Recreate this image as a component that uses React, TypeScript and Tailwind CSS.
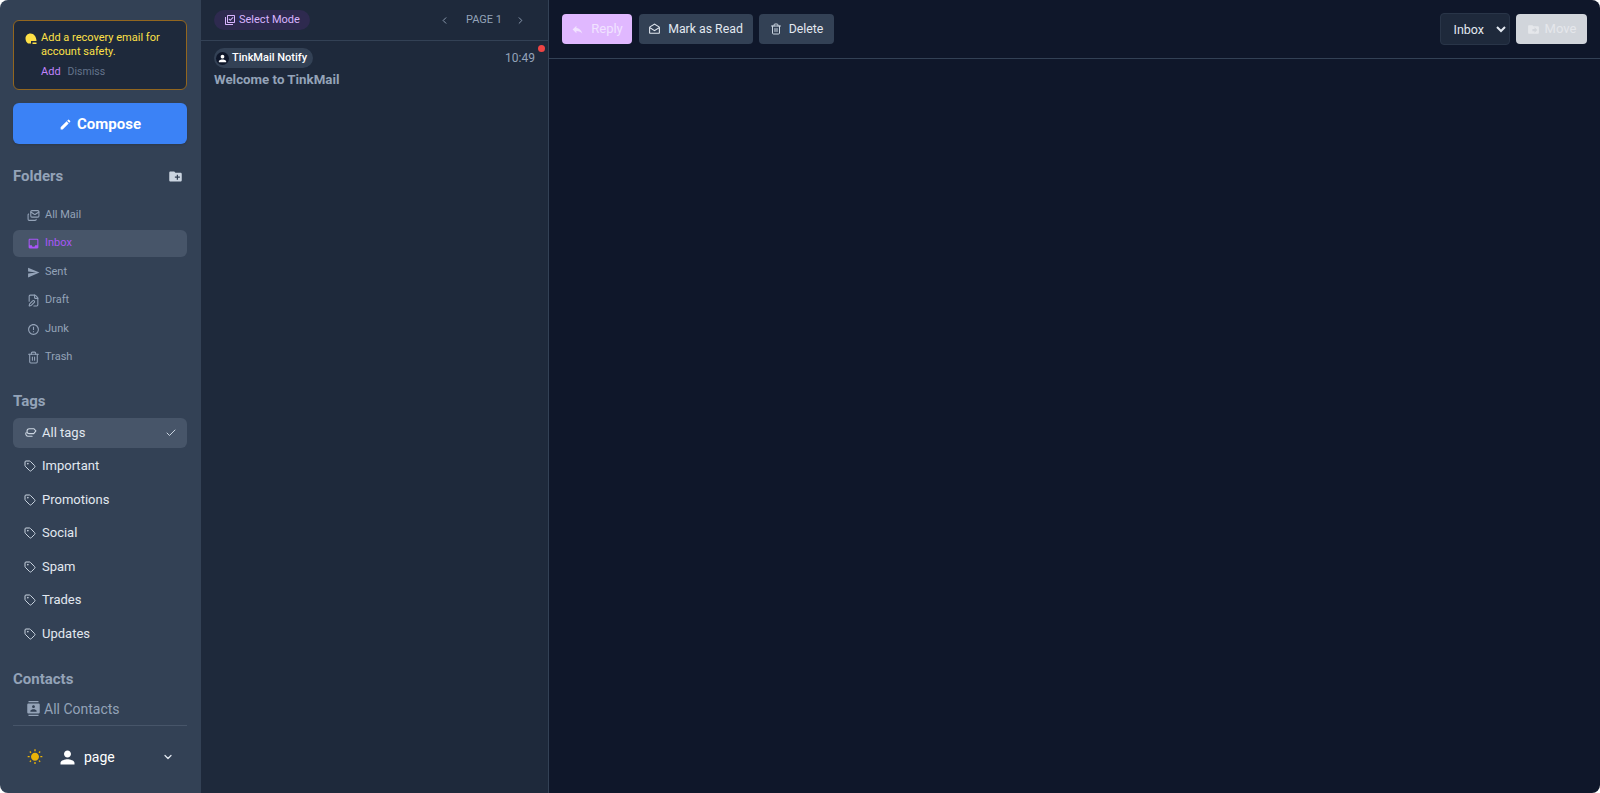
import { Check, ChevronDown, ChevronLeft, ChevronRight, FilePen, Mails, Tag, Trash2 } from "lucide-react";
import {
  MdContacts,
  MdCreateNewFolder,
  MdDriveFileMove,
  MdEdit,
  MdErrorOutline,
  MdInbox,
  MdOutlineDrafts,
  MdOutlineLibraryAddCheck,
  MdPerson,
  MdReply,
  MdSend,
  MdWbSunny,
} from "react-icons/md";

const folders = [
  { name: "All Mail", icon: Mails },
  { name: "Inbox", icon: MdInbox, active: true },
  { name: "Sent", icon: MdSend },
  { name: "Draft", icon: FilePen },
  { name: "Junk", icon: MdErrorOutline },
  { name: "Trash", icon: Trash2 },
];

const tags = ["Important", "Promotions", "Social", "Spam", "Trades", "Updates"];

function HelmetIcon() {
  return (
    <svg viewBox="0 0 24 24" className="absolute left-[11px] top-[12px] w-[12px] h-[12px] text-[#fde047]" fill="currentColor">
      <path d="M11 1C5 1 1 5.500 1 11c0 4 2 8 5 10h6v-5h11c0-8-5-15-12-15z" />
      <path d="M15 19h8v3h-8z" />
    </svg>
  );
}

function AllTagsIcon() {
  return (
    <svg viewBox="0 0 24 24" className="w-[13px] h-[13px] text-[#cbd5e1]" fill="none" stroke="currentColor" strokeWidth="2" strokeLinecap="round" strokeLinejoin="round">
      <path d="M10 5h8l4 4-4 5h-8a4.500 4.500 0 0 1 0-9z" />
      <path d="M4 12a4.500 4.500 0 0 0 4 7h7" />
    </svg>
  );
}

function Sidebar() {
  return (
    <aside className="w-[201px] shrink-0 bg-[#334155] pl-[13px] pr-[14px] pt-5 flex flex-col">
      <div className="h-[70px] rounded-md border border-[#92661f] bg-[#1e293b] pl-[27px] pr-2 pt-[10px] relative">
        <HelmetIcon />
        <p className="text-[11px] leading-[14px] text-[#fde047]">Add a recovery email for account safety.</p>
        <div className="mt-[6px] flex gap-[7px] text-[11px] leading-[14px]">
          <span className="text-[#c084fc]">Add</span>
          <span className="text-[10.500px] text-[#64748b]">Dismiss</span>
        </div>
      </div>

      <button className="mt-[13px] h-[41px] pt-[2px] rounded-md bg-[#3b82f6] text-white font-bold text-[15px] flex items-center justify-center gap-[5px] shadow-sm">
        <MdEdit className="w-[13px] h-[13px]" />
        Compose
      </button>

      <div className="mt-[22px] flex items-center justify-between pr-[4px]">
        <h2 className="text-[15px] font-bold leading-5 text-[#94a3b8]">Folders</h2>
        <MdCreateNewFolder className="w-[15px] h-[15px] text-[#cbd5e1]" />
      </div>

      <nav className="mt-[15px] flex flex-col gap-[1.500px]">
        {folders.map((f) => (
          <div
            key={f.name}
            className={`h-[27px] pt-[1px] rounded-md pl-[14px] flex items-center gap-[5px] text-[11px] ${
              f.active ? "bg-[#475569] text-[#a855f7]" : "text-[#94a3b8]"
            }`}
          >
            <f.icon className="w-[13px] h-[13px]" />
            {f.name}
          </div>
        ))}
      </nav>

      <h2 className="mt-[20px] text-[15px] font-bold leading-5 text-[#94a3b8]">Tags</h2>

      <div className="mt-[7px] h-[30px] rounded-md bg-[#475569] pl-[11px] pr-[10px] flex items-center gap-[5px] text-[13px] text-[#e2e8f0]">
        <AllTagsIcon />
        <span className="flex-1">All tags</span>
        <Check className="w-[12px] h-[12px] text-[#cbd5e1]" />
      </div>
      <div className="mt-[3.500px] flex flex-col gap-[3.500px]">
        {tags.map((t) => (
          <div key={t} className="h-[30px] pl-[11px] flex items-center gap-[6px] text-[13px] text-[#e2e8f0]">
            <Tag className="w-[12px] h-[12px] text-[#cbd5e1]" />
            {t}
          </div>
        ))}
      </div>

      <h2 className="mt-[20px] text-[15px] font-bold leading-5 text-[#94a3b8]">Contacts</h2>
      <div className="mt-[9px] pl-[13px] h-[22px] flex items-center gap-[3px] text-sm text-[#94a3b8]">
        <MdContacts className="w-[15px] h-[15px]" />
        All Contacts
      </div>

      <div className="mt-[5px] border-t border-[#475569] h-[64px] pl-[14px] pr-[13px] flex items-center">
        <MdWbSunny className="w-[16px] h-[16px] text-[#eab308]" />
        <MdPerson className="ml-[14px] w-[21px] h-[21px] text-white" />
        <span className="ml-[6px] text-sm text-white flex-1">page</span>
        <ChevronDown className="w-[12px] h-[12px] text-[#e2e8f0]" strokeWidth={2.5} />
      </div>
    </aside>
  );
}

function MessageList() {
  return (
    <section className="w-[348px] shrink-0 bg-[#1e293b] border-r border-[#334155]">
      <div className="h-[41px] border-b border-[#334155] pl-[13px] pr-[22px] flex items-center justify-between">
        <button className="h-[20px] rounded-full bg-[#2e2a4f] px-[10px] flex items-center gap-[3px] text-[11px] text-[#d8b4fe]">
          <MdOutlineLibraryAddCheck className="w-[12px] h-[12px]" />
          Select Mode
        </button>
        <div className="flex items-center gap-[16px] text-[11px] text-[#94a3b8]">
          <ChevronLeft className="w-[11px] h-[11px]" />
          PAGE 1
          <ChevronRight className="-ml-[3px] w-[11px] h-[11px]" />
        </div>
      </div>
      <div className="relative pl-[13px] pr-[13px] pt-[7px]">
        <div className="flex items-center justify-between">
          <span className="h-[20px] rounded-full bg-[#334155] pl-[2px] pr-[6px] flex items-center gap-[3px] text-[11px] font-medium text-white">
            <span className="w-[13px] h-[13px] rounded-full bg-[#0f172a] flex items-center justify-center">
              <MdPerson className="w-[11px] h-[11px] text-white" />
            </span>
            TinkMail Notify
          </span>
          <span className="text-xs text-[#94a3b8]">10:49</span>
        </div>
        <span className="absolute right-[3px] top-[4px] w-[7px] h-[7px] rounded-full bg-[#ef4444]" />
        <p className="mt-[2px] text-[13.300px] font-bold leading-5 text-[#94a3b8]">Welcome to TinkMail</p>
      </div>
    </section>
  );
}

function MailView() {
  return (
    <main className="flex-1 bg-[#0f172a]">
      <div className="h-[59px] border-b border-[#334155] pl-[13px] pr-[13px] flex items-center gap-[6.500px]">
        <button className="h-[30px] w-[70px] rounded bg-[#e0b8ff] flex items-center justify-center gap-[7px] text-[13px] text-[#f1e3ff]">
          <MdReply className="w-[13px] h-[13px]" />
          Reply
        </button>
        <button className="h-[30px] w-[114px] rounded bg-[#334155] flex items-center justify-center gap-[7px] text-[12.300px] text-[#e2e8f0]">
          <MdOutlineDrafts className="w-[13px] h-[13px]" />
          Mark as Read
        </button>
        <button className="h-[30px] w-[75px] rounded bg-[#334155] flex items-center justify-center gap-[7px] text-[12.300px] text-[#e2e8f0]">
          <Trash2 className="w-[12px] h-[12px] text-[#cbd5e1]" />
          Delete
        </button>
        <div className="flex-1" />
        <select className="h-[32px] w-[70px] rounded border border-[#293548] bg-[#1e293b] pl-[9px] text-[12.500px] text-[#e2e8f0]">
          <option>Inbox</option>
        </select>
        <button className="h-[30px] w-[71px] rounded bg-[#d1d5db] flex items-center justify-center gap-[5px] text-[13px] text-[#e5e7eb]">
          <MdDriveFileMove className="w-[13px] h-[13px]" />
          Move
        </button>
      </div>
    </main>
  );
}

export default function App() {
  return (
    <div className="h-screen bg-white font-['Roboto',sans-serif] overflow-hidden">
      <div className="h-full flex rounded-lg overflow-hidden">
        <Sidebar />
        <MessageList />
        <MailView />
      </div>
    </div>
  );
}
